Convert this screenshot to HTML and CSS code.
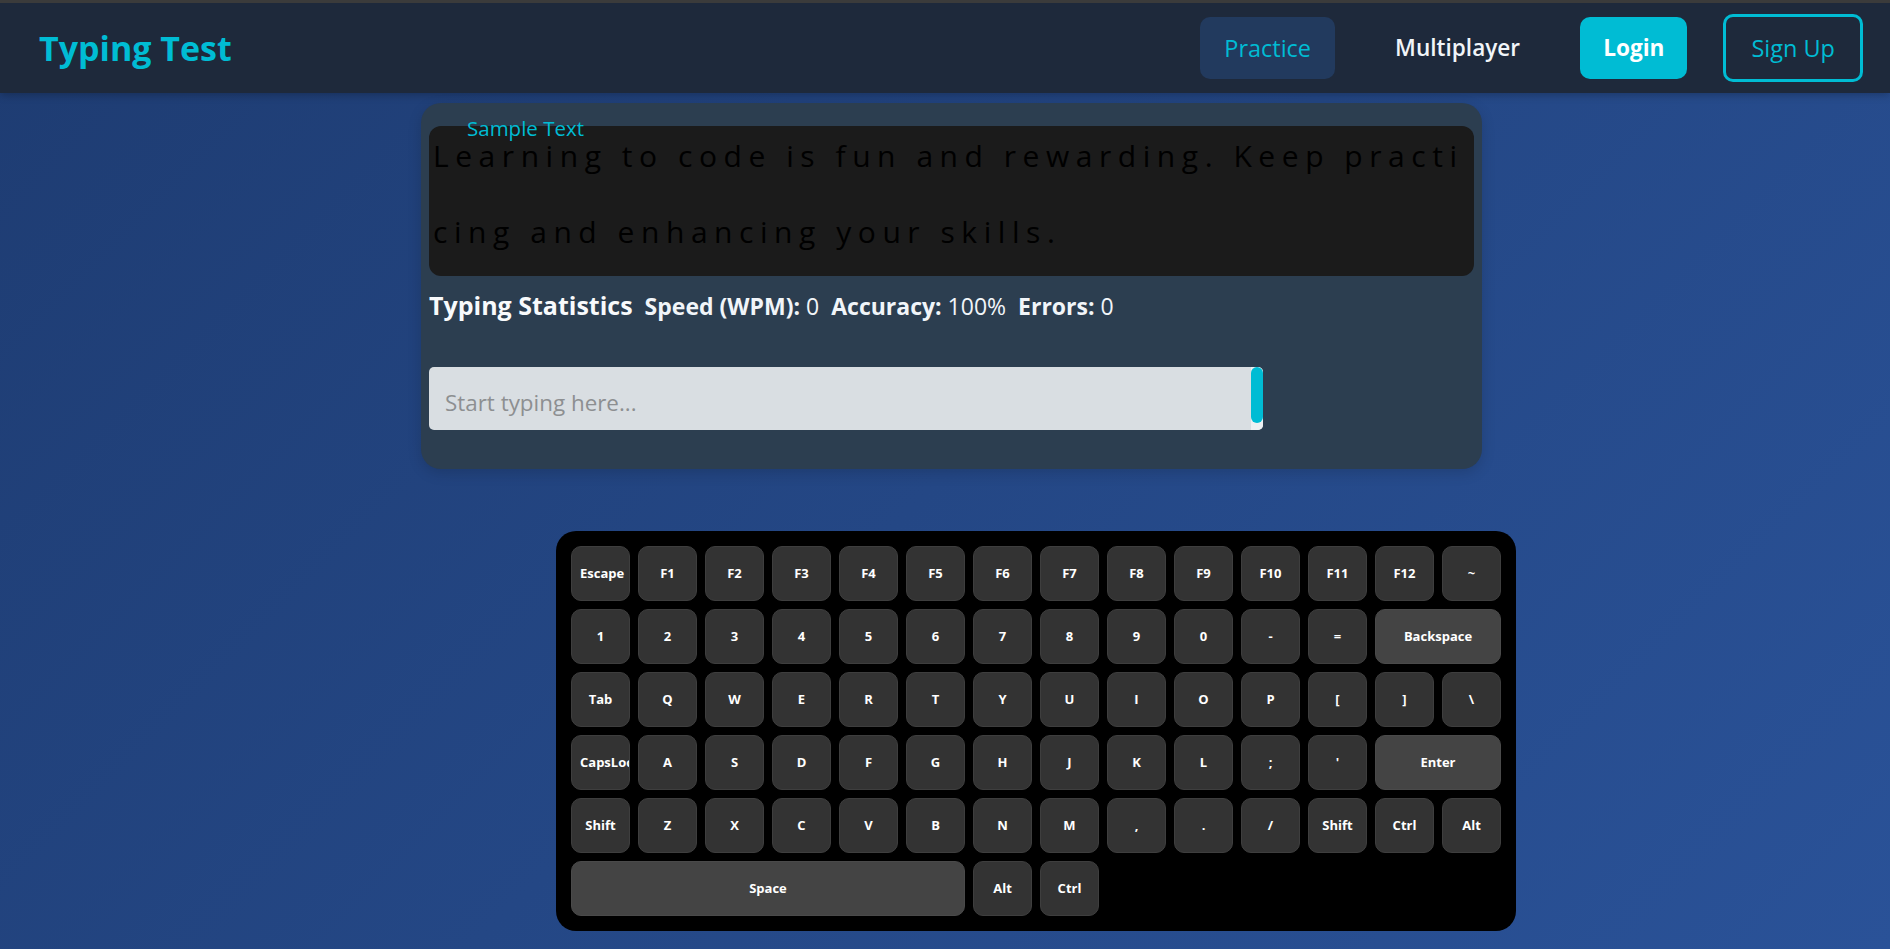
FILE: index.html
```html
<!DOCTYPE html>
<html lang="en">
<head>
<meta charset="utf-8">
<title>Typing Test</title>
<link rel="stylesheet" href="styles.css">
</head>
<body>
<header class="topbar">
  <div class="brand">Typing Test</div>
  <nav class="nav">
    <a class="nav-link active">Practice</a>
    <a class="nav-link strong">Multiplayer</a>
    <a class="nav-btn login">Login</a>
    <a class="nav-btn signup">Sign Up</a>
  </nav>
</header>
<main class="main">
  <section class="card">
    <h3 class="sample-label">Sample Text</h3>
    <div class="sample-box">
      <div class="sample-text">Learning to code is fun and rewarding. Keep practicing and enhancing your skills.</div>
    </div>
    <div class="stats">
      <h3 class="stats-title">Typing Statistics</h3>
      <span class="stat"><strong>Speed (WPM):</strong> 0</span>
      <span class="stat"><strong>Accuracy:</strong> 100%</span>
      <span class="stat"><strong>Errors:</strong> 0</span>
    </div>
    <div class="input-wrap">
      <textarea class="typing-input" placeholder="Start typing here..."></textarea>
      <span class="scroll-track"><span class="scroll-thumb"></span></span>
    </div>
  </section>

  <section class="keyboard">
    <div class="key">Escape</div>
    <div class="key">F1</div>
    <div class="key">F2</div>
    <div class="key">F3</div>
    <div class="key">F4</div>
    <div class="key">F5</div>
    <div class="key">F6</div>
    <div class="key">F7</div>
    <div class="key">F8</div>
    <div class="key">F9</div>
    <div class="key">F10</div>
    <div class="key">F11</div>
    <div class="key">F12</div>
    <div class="key">~</div>

    <div class="key">1</div>
    <div class="key">2</div>
    <div class="key">3</div>
    <div class="key">4</div>
    <div class="key">5</div>
    <div class="key">6</div>
    <div class="key">7</div>
    <div class="key">8</div>
    <div class="key">9</div>
    <div class="key">0</div>
    <div class="key">-</div>
    <div class="key">=</div>
    <div class="key wide span2">Backspace</div>

    <div class="key">Tab</div>
    <div class="key">Q</div>
    <div class="key">W</div>
    <div class="key">E</div>
    <div class="key">R</div>
    <div class="key">T</div>
    <div class="key">Y</div>
    <div class="key">U</div>
    <div class="key">I</div>
    <div class="key">O</div>
    <div class="key">P</div>
    <div class="key">[</div>
    <div class="key">]</div>
    <div class="key">\</div>

    <div class="key">CapsLock</div>
    <div class="key">A</div>
    <div class="key">S</div>
    <div class="key">D</div>
    <div class="key">F</div>
    <div class="key">G</div>
    <div class="key">H</div>
    <div class="key">J</div>
    <div class="key">K</div>
    <div class="key">L</div>
    <div class="key">;</div>
    <div class="key">'</div>
    <div class="key wide span2">Enter</div>

    <div class="key">Shift</div>
    <div class="key">Z</div>
    <div class="key">X</div>
    <div class="key">C</div>
    <div class="key">V</div>
    <div class="key">B</div>
    <div class="key">N</div>
    <div class="key">M</div>
    <div class="key">,</div>
    <div class="key">.</div>
    <div class="key">/</div>
    <div class="key">Shift</div>
    <div class="key">Ctrl</div>
    <div class="key">Alt</div>

    <div class="key wide span6">Space</div>
    <div class="key">Alt</div>
    <div class="key">Ctrl</div>
  </section>
</main>
</body>
</html>
```
FILE: styles.css
```css
* { box-sizing: border-box; }

html, body {
  margin: 0;
  padding: 0;
}

body {
  min-height: 100vh;
  font-family: "Open Sans", "Noto Sans", "Liberation Sans", sans-serif;
  background: linear-gradient(135deg, #1e3c72 0%, #2a5298 100%);
  color: #fff;
}

/* ---------- header ---------- */
.topbar {
  height: 93px;
  border-top: 3px solid #3b3b3b;
  background: #1e293b;
  display: flex;
  align-items: center;
  justify-content: space-between;
  padding: 0 27px 0 39px;
  box-shadow: 0 2px 8px rgba(0, 0, 0, 0.25);
}

.brand {
  font-size: 34px;
  font-weight: 700;
  color: #00bcd4;
}

.nav {
  display: flex;
  align-items: center;
  gap: 36px;
}

.nav-link,
.nav-btn {
  font-size: 22.6px;
  line-height: 30px;
  padding: 16px 24px;
  border-radius: 10px;
  cursor: pointer;
}

.nav-link.active {
  background: #223a5e;
  color: #00bcd4;
  font-size: 23.5px;
  padding: 16px 24px;
}

.nav-link.strong {
  color: #f1f5f9;
  font-weight: 600;
}

.nav-btn.login {
  background: #00bcd4;
  color: #fff;
  font-weight: 700;
  padding: 16px 23px;
}

.nav-btn.signup {
  border: 3px solid #00bcd4;
  color: #00bcd4;
  font-size: 23.5px;
  padding: 16px 25px;
}

/* ---------- main ---------- */
.main {
  padding-top: 10px;
  padding-bottom: 18px;
}

.card {
  position: relative;
  width: 1061px;
  margin-left: 421px;
  background: #2c3e50;
  border-radius: 20px;
  padding: 23px 8px 39px;
  box-shadow: 0 4px 14px rgba(0, 0, 0, 0.15);
}

.sample-label {
  position: absolute;
  top: 11px;
  left: 46px;
  margin: 0;
  font-size: 20.5px;
  font-weight: 400;
  line-height: 28px;
  color: #00bcd4;
}

.sample-box {
  height: 150px;
  background: #1b1b1b;
  border-radius: 12px;
  padding: 0 2px 0 4px;
  overflow: hidden;
}

.sample-text {
  margin-top: -8px;
  font-size: 30px;
  line-height: 76px;
  letter-spacing: 6.55px;
  word-break: break-all;
  color: #000;
}

.stats {
  display: flex;
  align-items: baseline;
  gap: 12px;
  margin-top: 13px;
  height: 33px;
  line-height: 33px;
}

.stats-title {
  margin: 0;
  font-size: 25px;
  font-weight: 700;
  color: #f8fafc;
}

.stat {
  font-size: 23px;
  color: #f1f5f9;
}

.stat strong {
  font-weight: 700;
}

.input-wrap {
  position: relative;
  width: 834px;
  height: 63px;
  margin-top: 45px;
}

.typing-input {
  display: block;
  width: 100%;
  height: 63px;
  border: none;
  border-radius: 5px;
  background: #d9dee2;
  padding: 21px 16px 10px;
  font-family: inherit;
  font-size: 22.4px;
  line-height: 30px;
  color: #222;
  resize: none;
  outline: none;
  overflow: hidden;
}

.typing-input::placeholder {
  color: #8d8f91;
}

.scroll-track {
  position: absolute;
  top: 0;
  right: 0;
  width: 12px;
  height: 63px;
  background: #eef0f2;
  border-radius: 0 5px 5px 0;
}

.scroll-thumb {
  display: block;
  width: 12px;
  height: 56px;
  background: #00bcd4;
  border-radius: 6px;
}

/* ---------- keyboard ---------- */
.keyboard {
  width: 960px;
  margin-left: 556px;
  margin-top: 62px;
  background: #000;
  border-radius: 20px;
  padding: 15px;
  display: grid;
  grid-template-columns: repeat(14, 1fr);
  grid-auto-rows: 55px;
  gap: 8px;
}

.key {
  background: #333333;
  border: 1px solid #3e3e3e;
  border-radius: 10px;
  color: #fff;
  font-size: 13px;
  font-weight: 700;
  line-height: 53px;
  text-align: center;
  padding: 0 8px;
  overflow: hidden;
  white-space: nowrap;
}

.key.wide {
  background: #444444;
  border-color: #4a4a4a;
}

.span2 { grid-column: span 2; }
.span6 { grid-column: span 6; }
```
